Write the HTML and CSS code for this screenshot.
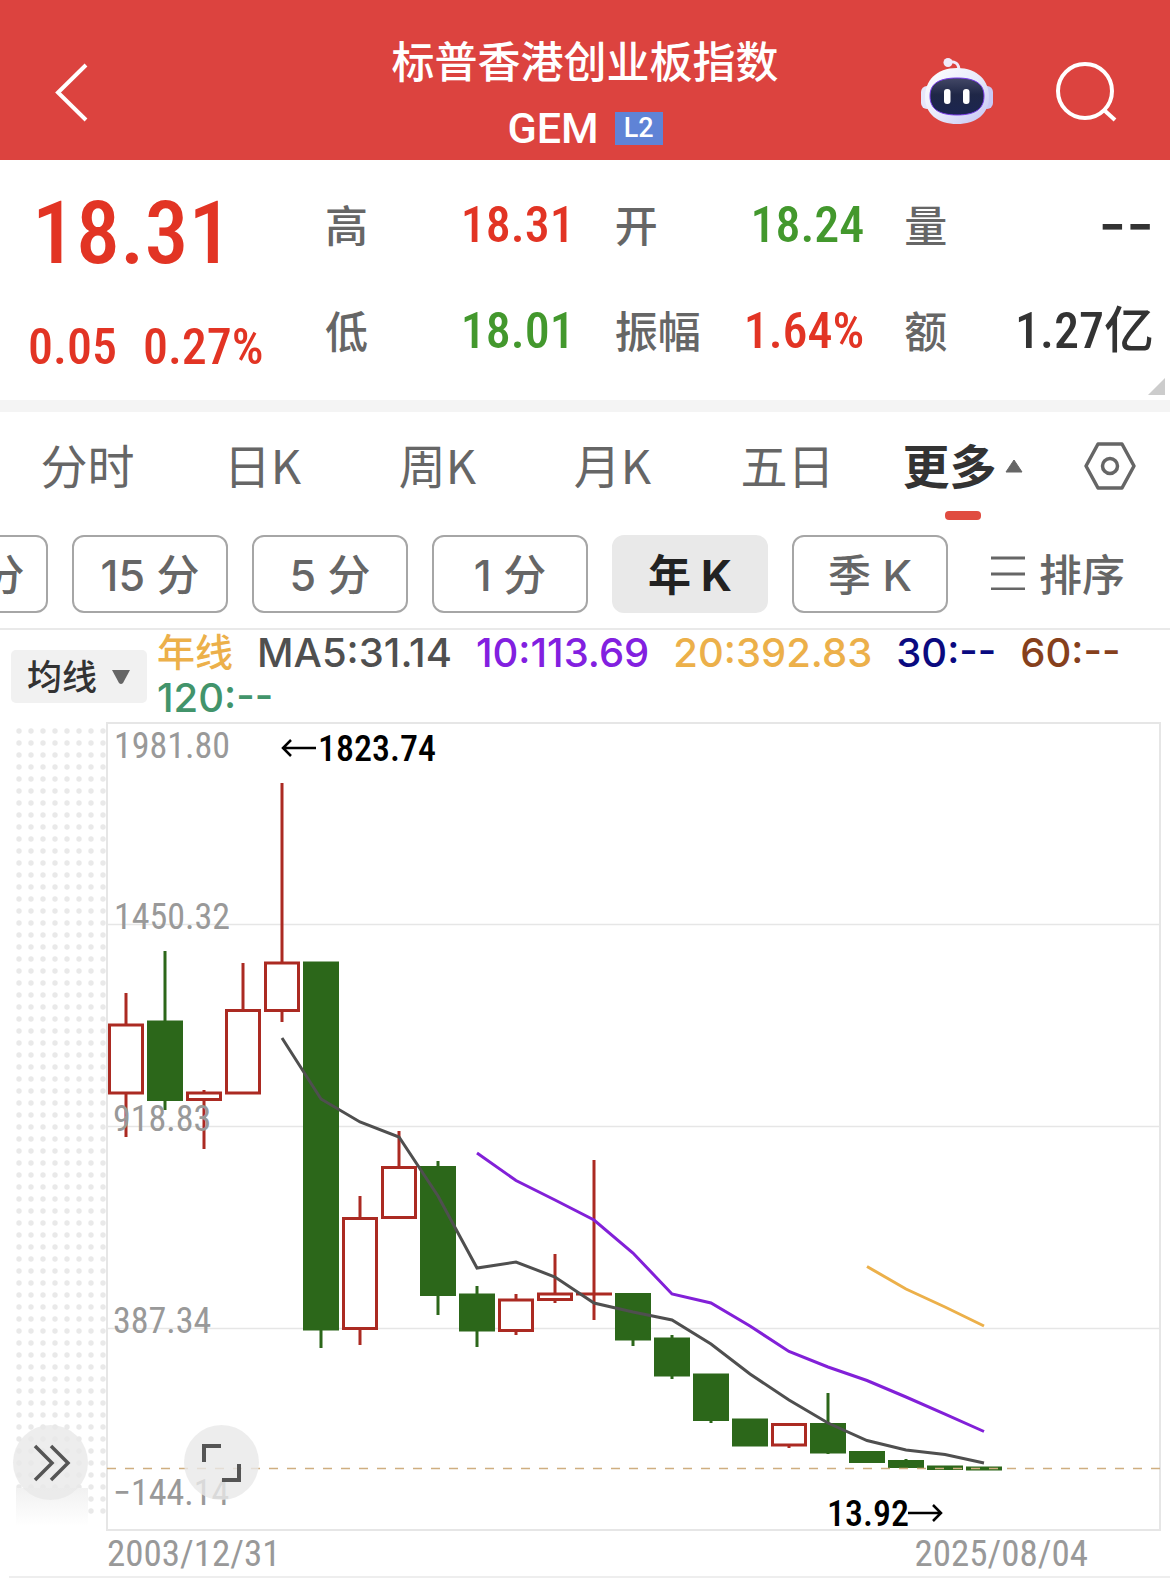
FILE: index.html
```html
<!DOCTYPE html>
<html lang="zh-CN">
<head>
<meta charset="utf-8">
<meta name="viewport" content="width=device-width, initial-scale=1">
<title>标普香港创业板指数 GEM</title>
<link rel="stylesheet" href="styles.css">
</head>
<body>
<header class="topbar">
  <button class="icon-btn back" type="button" aria-label="返回">
    <svg width="40" height="64" viewBox="0 0 40 64" fill="none" stroke="#fff" stroke-width="4"><path d="M34 4 6 31.500 34 59"/></svg>
  </button>
  <div class="heading">
    <h1 class="name">标普香港创业板指数</h1>
    <p class="code">GEM <span class="level">L2</span></p>
  </div>
  <div class="actions">
    <button class="icon-btn" type="button" aria-label="智能助手">
      <svg width="74" height="70" viewBox="0 0 74 70">
        <defs>
          <linearGradient id="shell" x1="0" y1="0" x2="1" y2="1"><stop offset="0" stop-color="#fff"/><stop offset=".5" stop-color="#e9ebfb"/><stop offset="1" stop-color="#c3c3f3"/></linearGradient>
          <linearGradient id="visor" x1="0" y1="0" x2="0" y2="1"><stop offset="0" stop-color="#434866"/><stop offset=".45" stop-color="#1f2747"/><stop offset="1" stop-color="#1b2550"/></linearGradient>
        </defs>
        <path d="M28 4c7-1 11 1 11 9" fill="none" stroke="#f1eafa" stroke-width="3"/>
        <circle cx="28" cy="4.500" r="4.500" fill="#f1eafa"/>
        <rect x="1" y="28" width="12" height="23" rx="6" fill="#e6e6fa"/>
        <rect x="61" y="28" width="12" height="23" rx="6" fill="#c9c9f5"/>
        <path d="M37 10c21 0 32 13 32 29 0 17-13 27-32 27S5 56 5 39c0-16 11-29 32-29Z" fill="url(#shell)"/>
        <path d="M37 20c20 0 27 7 27 18 0 13-9 19-27 19s-27-6-27-19c0-11 7-18 27-18Z" fill="url(#visor)" stroke="#7a3bea" stroke-width="1"/>
        <rect x="24" y="31" width="6.500" height="15" rx="3" fill="#fff"/>
        <rect x="43" y="31" width="6.500" height="15" rx="3" fill="#fff"/>
      </svg>
    </button>
    <button class="icon-btn" type="button" aria-label="搜索">
      <svg width="64" height="64" viewBox="0 0 64 64" fill="none" stroke="#fff" stroke-width="4"><circle cx="31" cy="30" r="27"/><path d="m50 49 11 10"/></svg>
    </button>
  </div>
</header>

<section class="quote">
  <div class="price up">
    <strong class="last">18.31</strong>
    <p class="change"><span>0.05</span><span>0.27%</span></p>
  </div>
  <dl class="stats">
    <div class="stat"><dt>高</dt><dd class="up">18.31</dd></div>
    <div class="stat"><dt>开</dt><dd class="down">18.24</dd></div>
    <div class="stat"><dt>量</dt><dd class="dashes">--</dd></div>
    <div class="stat"><dt>低</dt><dd class="down">18.01</dd></div>
    <div class="stat"><dt>振幅</dt><dd class="up">1.64%</dd></div>
    <div class="stat"><dt>额</dt><dd>1.27亿</dd></div>
  </dl>
  <svg class="corner" width="17" height="17" viewBox="0 0 17 17"><path d="M17 0v17H0Z" fill="#ccc"/></svg>
</section>

<nav class="tabs">
  <button class="tab" type="button">分时</button>
  <button class="tab" type="button">日K</button>
  <button class="tab" type="button">周K</button>
  <button class="tab" type="button">月K</button>
  <button class="tab" type="button">五日</button>
  <button class="tab tab-on" type="button">更多<svg width="18" height="14" viewBox="0 0 18 14"><path d="m9 1 8 12H1Z" fill="#666" stroke="#666" stroke-linejoin="round"/></svg></button>
  <button class="tab" type="button" aria-label="设置">
    <svg width="54" height="54" viewBox="0 0 54 54" fill="none" stroke="#666" stroke-width="3.500" stroke-linejoin="round"><path d="M15 5h24l12 22-12 22H15L3 27Z"/><circle cx="27" cy="27" r="7.500"/></svg>
  </button>
</nav>

<div class="periods">
  <div class="strip">
    <button class="pill" type="button">30 分</button>
    <button class="pill" type="button">15 分</button>
    <button class="pill" type="button">5 分</button>
    <button class="pill" type="button">1 分</button>
    <button class="pill pill-on" type="button">年 K</button>
    <button class="pill" type="button">季 K</button>
  </div>
  <button class="sort" type="button">
    <svg width="34" height="36" viewBox="0 0 34 36" stroke="#666" stroke-width="3"><path d="M0 4h34M0 20h34M0 35h34"/></svg>排序
  </button>
</div>

<div class="legend">
  <label class="indicator">
    <select class="indicator-select" aria-label="指标"><option>均线</option></select>
    <svg width="20" height="16" viewBox="0 0 20 16"><path d="M1 1h18l-7 13q-2 2-4 0Z" fill="#666"/></svg>
  </label>
  <ul class="averages">
    <li class="c-year">年线</li>
    <li class="c-ma5">MA5:31.14</li>
    <li class="c-ma10">10:113.69</li>
    <li class="c-ma20">20:392.83</li>
    <li class="c-ma30">30:--</li>
    <li class="c-ma60">60:--</li>
    <li class="c-ma120">120:--</li>
  </ul>
</div>

<main class="chart">
  <svg class="plot" viewBox="0 720 1170 812" role="img" aria-label="年K线图">
    <defs>
      <pattern id="dots" x="13" y="725" width="12" height="12" patternUnits="userSpaceOnUse"><circle cx="6" cy="6" r="2.700" fill="#e9e9e9"/></pattern>
      <linearGradient id="fade" x1="0" y1="0" x2="0" y2="1"><stop offset="0" stop-color="#f1f1f1"/><stop offset="1" stop-color="#fff"/></linearGradient>
    </defs>
    <rect x="13" y="725" width="93" height="792" fill="url(#dots)"/>
    <rect x="16" y="1488" width="72" height="38" fill="url(#fade)"/>
    <path class="grid" d="M107 924.500H1160M107 1126.500H1160M107 1328.500H1160"/>
    <rect class="frame" x="107" y="723" width="1053" height="807"/>

    <g class="rise">
      <path d="M126 993v31M126 1093v44M204 1090v3M204 1100v49M243 963v47M282 783v179M282 1010v12M360 1196v22M360 1329v16M399 1131v36M516 1294v6M516 1330v5M555 1254v40M555 1300v3M594 1160v160M576 1294h36M789 1445v3"/>
      <path d="M109.500 1025h33v68h-33ZM187.500 1093h33v6.500h-33ZM226.500 1010.500h33v82.500h-33ZM265.500 963h33v47.500h-33ZM343.500 1218.500h33v110h-33ZM382.500 1167.500h33v50h-33ZM499.500 1300h33v30.500h-33ZM538.500 1294h33v5.500h-33ZM772.500 1424.500h33v20.500h-33Z"/>
    </g>
    <g class="fall">
      <path class="wick" d="M165 951v159M321 1330v18M438 1161v154M477 1286v61M633 1340v6M672 1335v44M711 1420v3M828 1393v61M906 1459v3"/>
      <path d="M147 1020.500h36v80.500h-36ZM303 961.500h36v369h-36ZM420 1166h36v130h-36ZM459 1293.500h36v38h-36ZM615 1293h36v47.500h-36ZM654 1337.500h36v39h-36ZM693 1373.500h36v47.500h-36ZM732 1418.500h36v28h-36ZM810 1423h36v30.500h-36ZM849 1451h36v12h-36ZM888 1460h36v8h-36ZM927 1465.500h36v4.500h-36ZM966 1466.500h36v4h-36Z"/>
    </g>
    <path class="latest" d="M107 1468.500H1160"/>

    <polyline class="line l-ma5" points="282,1038 321,1099 360,1122 399,1137 438,1196 477,1268 516,1262 555,1277 594,1303 633,1312 672,1320 711,1344 750,1374 789,1400 828,1423 867,1440.500 906,1450 945,1454.500 984,1463"/>
    <polyline class="line l-ma10" points="477,1153 516,1180.500 555,1200 594,1220 633,1253 672,1294 711,1303 750,1326 789,1351.500 828,1367 867,1380.500 906,1397 945,1414 984,1431.500"/>
    <polyline class="line l-ma20" points="867,1266.500 906,1289 945,1307 984,1326"/>

    <g class="scale">
      <text x="114" y="758">1981.80</text>
      <text x="114" y="929">1450.32</text>
      <text x="113" y="1131">918.83</text>
      <text x="113" y="1333">387.34</text>
      <text x="113" y="1505">−144.14</text>
    </g>
    <g class="extreme">
      <path d="M316 748h-33M291 740l-8 8 8 8M908 1513h33M933 1505l8 8-8 8"/>
      <text x="318" y="761">1823.74</text>
      <text x="827" y="1526">13.92</text>
    </g>
  </svg>
  <button class="round expand" type="button" aria-label="展开">
    <svg width="40" height="40" viewBox="0 0 40 40" fill="none" stroke="#555" stroke-width="3.500"><path d="m4 3 17 17L4 37M20 3l17 17-17 17"/></svg>
  </button>
  <button class="round full" type="button" aria-label="全屏">
    <svg width="40" height="40" viewBox="0 0 40 40" fill="none" stroke="#555" stroke-width="4"><path d="M2 19V3h17M37 21v16H20"/></svg>
  </button>
</main>

<footer class="dates"><time>2003/12/31</time><time>2025/08/04</time></footer>
</body>
</html>
```
FILE: styles.css
```css
* { box-sizing: border-box; }
body, h1, p, dl, dd, ul { margin: 0; padding: 0; }
body {
  background: #fff;
  color: #333;
  font-family: Inter, "Noto Sans CJK SC", sans-serif;
}
button {
  border: 0;
  padding: 0;
  background: none;
  color: inherit;
  font: inherit;
}
svg { display: block; }
ul { list-style: none; }

.topbar {
  display: grid;
  grid-template-columns: 1fr auto 1fr;
  padding: 26px 52px 0;
  background: #dc433f;
  color: #fff;
}
.back { justify-self: start; }
.heading { text-align: center; }
.name {
  font-family: "Noto Sans CJK SC", sans-serif;
  font-size: 43px;
  font-weight: 500;
  line-height: 66px;
}
.code {
  display: flex;
  justify-content: center;
  align-items: center;
  gap: 16px;
  padding-top: 4px;
  font-family: Roboto, sans-serif;
  font-size: 43px;
  font-weight: 500;
  line-height: 64px;
}
.level {
  padding: 0 9px;
  background: #5f83d6;
  font-size: 27px;
  line-height: 33px;
}
.actions {
  display: flex;
  justify-content: flex-end;
  align-items: center;
  gap: 60px;
}

.quote {
  position: relative;
  display: grid;
  grid-template-columns: 297px 1fr;
  height: 252px;
  padding: 0 16px 0 28px;
  border-bottom: 12px solid #f4f4f4;
  font-family: "Roboto Condensed", Roboto, "Noto Sans CJK SC", sans-serif;
  font-size: 50px;
  font-weight: 500;
}
.up { color: #e23424; }
.down { color: #43982d; }
.last {
  display: block;
  padding: 18px 0 0 4px;
  font-size: 88px;
  font-weight: 500;
  line-height: 110px;
}
.change {
  display: flex;
  gap: 26px;
  line-height: 118px;
}
.stats {
  display: grid;
  grid-template-columns: repeat(3, 1fr);
  grid-template-rows: 106px 106px;
  column-gap: 40px;
  padding-top: 12px;
}
.stat {
  display: flex;
  justify-content: space-between;
  align-items: center;
}
.stat dt {
  padding-bottom: 4px;
  color: #666;
  font-family: "Noto Sans CJK SC", sans-serif;
  font-size: 43px;
}
.stat dd { line-height: 60px; }
.stat .dashes {
  padding-bottom: 4px;
  font-family: Inter, sans-serif;
  font-size: 60px;
}
.corner {
  position: absolute;
  right: 5px;
  bottom: 5px;
}

.tabs {
  display: grid;
  grid-template-columns: repeat(6, 1fr) 120px;
  height: 108px;
  color: #666;
  font-family: "Noto Sans CJK SC", sans-serif;
  font-size: 47px;
  font-weight: 400;
  line-height: 104px;
}
.tab {
  display: flex;
  justify-content: center;
  position: relative;
}
.tab svg { align-self: center; }
.tab-on {
  gap: 8px;
  color: #333;
  font-weight: 700;
}
.tab-on::after {
  content: "";
  position: absolute;
  bottom: 0;
  left: calc(50% - 18px);
  width: 36px;
  height: 9px;
  border-radius: 4px;
  background: #e04c40;
}

.periods {
  display: flex;
  padding: 15px 0;
  border-bottom: 2px solid #e9e9e9;
  color: #666;
  font-size: 43px;
  font-weight: 500;
}
.strip {
  display: flex;
  flex: 1;
  justify-content: flex-end;
  gap: 24px;
  overflow: hidden;
}
.pill {
  flex: none;
  width: 156px;
  height: 78px;
  padding-bottom: 4px;
  border: 2px solid #a6a6a6;
  border-radius: 12px;
  word-spacing: normal;
}
.pill-on {
  border-color: #e9e9e9;
  background: #e9e9e9;
  color: #222;
  font-weight: 700;
}
.sort {
  display: flex;
  align-items: center;
  justify-content: flex-start;
  gap: 14px;
  width: 222px;
  padding: 0 0 4px 43px;
}

.legend {
  display: flex;
  gap: 10px;
  height: 90px;
  padding-left: 11px;
}
.indicator {
  display: grid;
  flex: none;
  align-items: center;
  width: 136px;
  height: 53px;
  margin-top: 20px;
}
.indicator > * { grid-area: 1 / 1; }
.indicator svg { justify-self: end; margin-right: 16px; }
.indicator-select {
  appearance: none;
  width: 100%;
  height: 100%;
  padding: 0 16px 3px;
  border: 0;
  border-radius: 5px;
  background: #f1f1f1;
  color: #333;
  font: 500 35px/50px "Noto Sans CJK SC", sans-serif;
}
.averages {
  display: flex;
  flex-wrap: wrap;
  column-gap: 24px;
  font-size: 40px;
  font-weight: 500;
  line-height: 45px;
}
.c-year { font-size: 38px; }
.c-year, .c-ma20 { color: #ecb04a; }
.c-ma5 { color: #4f4f4f; }
.c-ma10 { color: #8220e0; }
.c-ma30 { color: #0a0a80; }
.c-ma60 { color: #86401c; }
.c-ma120 { color: #42946b; }

.chart { position: relative; }
.plot {
  width: 100%;
  font-family: "Roboto Condensed", Roboto, sans-serif;
}
.grid { stroke: #e6e6e6; stroke-width: 1.5; }
.frame { fill: none; stroke: #e6e6e6; stroke-width: 2; }
.rise { fill: #fff; stroke: #ab2a22; stroke-width: 3; }
.fall { fill: #2c671a; }
.wick { stroke: #2c671a; stroke-width: 3; }
.latest { stroke: #cfae80; stroke-width: 1.5; stroke-dasharray: 9 9; }
.line { fill: none; stroke-width: 3; }
.l-ma5 { stroke: #4f4f4f; }
.l-ma10 { stroke: #8220d8; }
.l-ma20 { stroke: #ecb04a; }
.scale { fill: #999; font-size: 36px; }
.extreme { fill: #000; font-size: 36px; font-weight: 500; }
.extreme path { fill: none; stroke: #000; stroke-width: 2.5; }
.round {
  position: absolute;
  bottom: 32px;
  display: grid;
  place-items: center;
  width: 75px;
  height: 75px;
  border-radius: 50%;
  background: rgba(233, 233, 233, .8);
}
.expand { left: 13px; }
.full { left: 184px; }

.dates {
  display: flex;
  justify-content: space-between;
  margin-left: 9px;
  padding: 0 82px 0 98px;
  border-bottom: 2px solid #eee;
  color: #999;
  font-family: "Roboto Condensed", Roboto, sans-serif;
  font-size: 37px;
  line-height: 44px;
}
```
